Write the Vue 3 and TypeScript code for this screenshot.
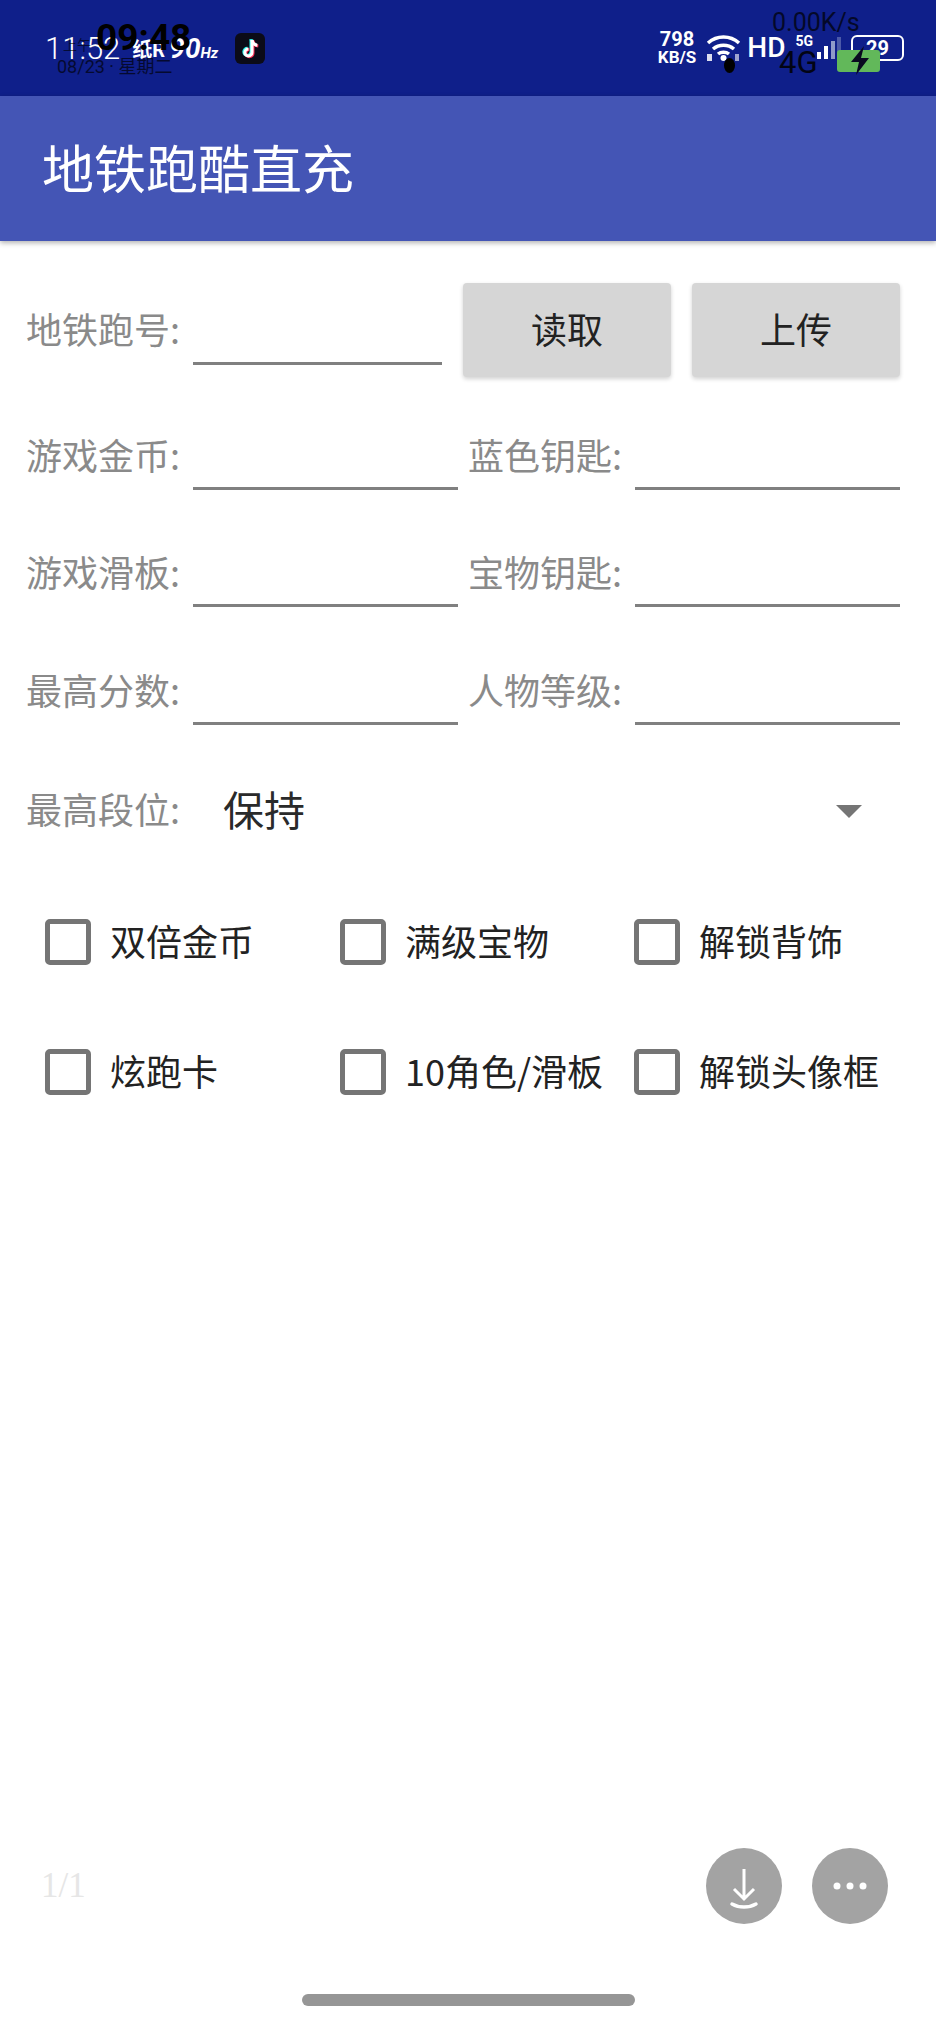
<script setup lang="ts">
// Form rows for the recharge screen
const statRows = [
  [{ label: '游戏金币:' }, { label: '蓝色钥匙:' }],
  [{ label: '游戏滑板:' }, { label: '宝物钥匙:' }],
  [{ label: '最高分数:' }, { label: '人物等级:' }],
]

const options = ['双倍金币', '满级宝物', '解锁背饰', '炫跑卡', '10角色/滑板', '解锁头像框']
</script>

<template>
  <div class="page">
    <header class="status">
      <div class="status-left">
        <span class="clock">11:52</span>
        <span class="mini">纸R</span>
        <span class="hz">90<small>Hz</small></span>
        <svg class="tiktok" viewBox="0 0 30 31" width="30" height="31">
          <rect width="30" height="31" rx="6" fill="#0b0b18" />
          <path d="M17 7v12.500a3.600 3.600 0 1 1-3.600-3.600" fill="none" stroke="#25f4ee" stroke-width="3" transform="translate(-1 -.7)" />
          <path d="M17 7c.4 3 2.400 5 5.300 5.300" fill="none" stroke="#25f4ee" stroke-width="3" transform="translate(-1 -.7)" />
          <path d="M17 7v12.500a3.600 3.600 0 1 1-3.600-3.600" fill="none" stroke="#fe2c55" stroke-width="3" transform="translate(1 .7)" />
          <path d="M17 7c.4 3 2.400 5 5.300 5.300" fill="none" stroke="#fe2c55" stroke-width="3" transform="translate(1 .7)" />
          <path d="M17 7v12.500a3.600 3.600 0 1 1-3.600-3.600" fill="none" stroke="#fff" stroke-width="3" />
          <path d="M17 7c.4 3 2.400 5 5.300 5.300" fill="none" stroke="#fff" stroke-width="3" />
        </svg>
      </div>
      <div class="status-right">
        <div class="speed"><b>798</b><b class="unit">KB/S</b></div>
        <svg class="wifi" viewBox="0 0 35 28" width="35" height="28">
          <path d="M2 9c9-8 22-8 31 0M7 15c6-5 15-5 21 0M12 20c3-2.500 8-2.500 11 0" fill="none" stroke="#fff" stroke-width="3.500" />
          <circle cx="17.500" cy="24" r="3" fill="#fff" />
          <rect x="1" y="20" width="5" height="7" fill="#fff" opacity=".85" />
          <rect x="29" y="20" width="4" height="7" fill="#fff" opacity=".6" />
        </svg>
        <span class="hd">HD</span>
        <span class="net">5G</span>
        <svg class="bars" viewBox="0 0 24 22" width="24" height="22">
          <rect x="0" y="15" width="4" height="7" fill="#fff" />
          <rect x="7" y="9" width="4" height="13" fill="#fff" />
          <rect x="14" y="4" width="4" height="18" fill="#8f9bc9" />
          <rect x="20" y="0" width="4" height="22" fill="#4c5aa8" />
        </svg>
        <div class="battery"><span>29</span></div>
      </div>

      <!-- second status bar ghosted over the first one -->
      <div class="ghost ghost-time">09:48</div>
      <div class="ghost ghost-ampm">上午</div>
      <div class="ghost ghost-date">08/23 · 星期二</div>
      <div class="ghost ghost-speed">0.00K/s</div>
      <div class="ghost ghost-net">4G</div>
      <div class="ghost ghost-dot"></div>
      <svg class="ghost ghost-batt" viewBox="0 0 44 24" width="44" height="24">
        <rect x="0" y="1" width="43" height="22" rx="3" fill="#62b85a" />
        <path d="M27-3 14 13h8l-3 13 13-17h-8z" fill="#0a0a20" />
      </svg>
    </header>

    <div class="appbar">地铁跑酷直充</div>

    <main class="form">
      <div class="row first">
        <label class="label">地铁跑号:</label>
        <div class="field short"></div>
        <button class="btn" type="button">读取</button>
        <button class="btn" type="button">上传</button>
      </div>

      <div v-for="(row, i) in statRows" :key="i" class="row stat" :class="'stat-' + i">
        <template v-for="cell in row" :key="cell.label">
          <label class="label">{{ cell.label }}</label>
          <div class="field"></div>
        </template>
      </div>

      <div class="row spinner">
        <label class="label">最高段位:</label>
        <span class="value">保持</span>
        <span class="arrow"></span>
      </div>

      <div class="options">
        <div v-for="opt in options" :key="opt" class="option">
          <span class="box"></span>
          <span class="option-text">{{ opt }}</span>
        </div>
      </div>
    </main>

    <footer class="foot">
      <span class="pager">1/1</span>
      <div class="fabs">
        <div class="fab">
          <svg viewBox="0 0 76 76" width="76" height="76">
            <path d="M38 21v30M28 41l10 10 10-10" fill="none" stroke="#fff" stroke-width="3" />
            <path d="M26 56c7 4 17 4 24 0" fill="none" stroke="#fff" stroke-width="3.500" stroke-linecap="round" />
          </svg>
        </div>
        <div class="fab">
          <svg viewBox="0 0 76 76" width="76" height="76">
            <circle cx="25" cy="38" r="3.500" fill="#fff" />
            <circle cx="38" cy="38" r="3.500" fill="#fff" />
            <circle cx="51" cy="38" r="3.500" fill="#fff" />
          </svg>
        </div>
      </div>
    </footer>
    <div class="home-bar"></div>
  </div>
</template>

<style>
html, body {
  margin: 0;
  background: #fff;
}
</style>

<style scoped>
.page {
  width: 936px;
  height: 2025px;
  display: flex;
  flex-direction: column;
  overflow: hidden;
  background: #fff;
  font-family: "Noto Sans CJK SC", "Roboto", sans-serif;
}

.status {
  position: relative;
  flex: none;
  height: 96px;
  background: #0f1f8a;
  color: #fff;
  display: flex;
  justify-content: space-between;
  align-items: center;
  padding: 0 32px 0 45px;
  box-sizing: border-box;
  font-family: "Roboto", "Noto Sans CJK SC", sans-serif;
}
.status-left, .status-right {
  display: flex;
  align-items: center;
}
.clock {
  font-size: 31px;
  font-weight: 300;
}
.mini {
  margin-left: 12px;
  font-size: 20px;
  font-weight: 700;
  width: 30px;
  white-space: nowrap;
}
.hz {
  margin-left: 7px;
  font-size: 28px;
  font-weight: 700;
  font-style: italic;
}
.hz small {
  font-size: 15px;
}
.tiktok {
  margin-left: 17px;
}
.speed {
  display: flex;
  flex-direction: column;
  align-items: center;
  line-height: 18px;
  font-size: 20px;
}
.speed .unit {
  font-size: 17px;
}
.wifi {
  margin-left: 10px;
}
.hd {
  margin-left: 6px;
  font-size: 28px;
  font-weight: 500;
  line-height: 1;
}
.net {
  margin: -14px 0 0 10px;
  font-size: 14px;
  font-weight: 700;
}
.bars {
  margin-left: 4px;
}
.battery {
  margin-left: 10px;
  width: 53px;
  height: 26px;
  border: 2px solid #fff;
  border-radius: 6px;
  box-sizing: border-box;
  display: flex;
  align-items: center;
  justify-content: center;
  font-size: 20px;
  font-weight: 700;
  line-height: 1;
}

.ghost {
  position: absolute;
  color: #000;
  line-height: 1;
  white-space: nowrap;
}
.ghost-time {
  left: 96px;
  top: 19px;
  font-size: 37px;
  font-weight: 700;
}
.ghost-ampm {
  left: 63px;
  top: 38px;
  font-size: 14px;
  opacity: .6;
}
.ghost-date {
  left: 57px;
  top: 58px;
  font-size: 18px;
  opacity: .65;
}
.ghost-speed {
  left: 772px;
  top: 10px;
  font-size: 25px;
  opacity: .7;
}
.ghost-net {
  left: 779px;
  top: 47px;
  font-size: 31px;
  opacity: .85;
}
.ghost-dot {
  left: 724px;
  top: 58px;
  width: 11px;
  height: 15px;
  border-radius: 50%;
  background: #000;
}
.ghost-batt {
  left: 837px;
  top: 49px;
  overflow: visible;
}

.appbar {
  flex: none;
  height: 145px;
  padding-left: 42px;
  padding-bottom: 3px;
  box-sizing: border-box;
  background: #4455b5;
  color: #fff;
  font-size: 52px;
  line-height: 142px;
  box-shadow: 0 2px 5px rgba(0, 0, 0, .3);
  position: relative;
}

.form {
  flex: 1;
  padding: 42px 36px 0 26px;
}
.row {
  display: flex;
  align-items: center;
}
.label {
  flex: none;
  width: 167px;
  font-size: 36px;
  line-height: 60px;
  padding-bottom: 6px;
  color: #8a8a8a;
}
.field {
  flex: none;
  width: 265px;
  height: 66px;
  box-sizing: border-box;
  border-bottom: 3px solid #808080;
}
.stat .field + .label {
  margin-left: 10px;
}
.first {
  height: 94px;
}
.first .field {
  width: 249px;
  margin: 12px 21px 0 0;
  height: 70px;
}
.first .label, .first .field {
  align-self: flex-start;
}
.first .label {
  margin-top: 15px;
}
.btn {
  width: 208px;
  height: 94px;
  padding: 0 0 4px;
  border: 0;
  border-radius: 4px;
  background: #d6d6d6;
  color: #222;
  font: inherit;
  font-size: 36px;
  box-shadow: 0 2px 4px rgba(0, 0, 0, .18);
}
.btn + .btn {
  margin-left: 21px;
}
.stat-0 {
  margin-top: 47px;
}
.stat-1 {
  margin-top: 51px;
}
.stat-2 {
  margin-top: 52px;
}
.spinner {
  margin-top: 53px;
  position: relative;
}
.value {
  font-size: 41px;
  line-height: 60px;
  padding-bottom: 6px;
  color: #2a2a2a;
  margin-left: 30px;
}
.arrow {
  margin-left: auto;
  margin-right: 38px;
  width: 0;
  height: 0;
  border-left: 13px solid transparent;
  border-right: 13px solid transparent;
  border-top: 13px solid #757575;
}
.options {
  margin: 33px 0 0 19px;
  display: grid;
  grid-template-columns: 295px 294px 1fr;
  grid-auto-rows: 130px;
}
.option {
  display: flex;
  align-items: center;
  font-size: 36px;
  color: #222;
  white-space: nowrap;
}
.option-text {
  padding-bottom: 5px;
}
.box {
  flex: none;
  width: 46px;
  height: 46px;
  margin-right: 19px;
  box-sizing: border-box;
  border: 5px solid #757575;
  border-radius: 5px;
}

.foot {
  flex: none;
  display: flex;
  justify-content: space-between;
  align-items: center;
  height: 76px;
  padding: 0 48px 0 41px;
}
.pager {
  font-size: 35px;
  color: #e6e6e6;
  font-family: "Liberation Serif", serif;
}
.fabs {
  display: flex;
  gap: 30px;
}
.fab {
  width: 76px;
  height: 76px;
  border-radius: 50%;
  background: #a3a3a3;
}
.home-bar {
  flex: none;
  width: 333px;
  height: 12px;
  margin: 70px 0 19px 302px;
  border-radius: 6px;
  background: #969696;
}
</style>
